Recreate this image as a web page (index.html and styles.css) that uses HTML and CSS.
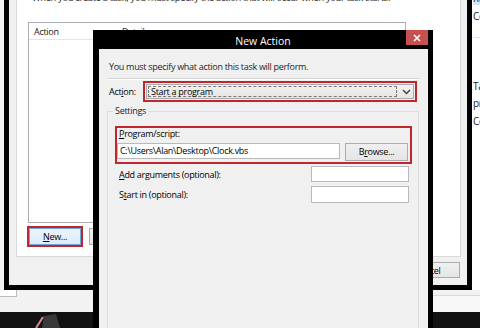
FILE: index.html
```html
<!DOCTYPE html>
<html>
<head>
<meta charset="utf-8">
<link rel="stylesheet" href="styles.css">
</head>
<body>
<div class="main-win">
  <div class="main-top">
    <div class="main-pane">
      <div class="mp-row sel">Run</div>
      <div class="mp-row r1">Connect</div>
      <div class="mp-row r2">Task Scheduler</div>
      <div class="mp-row r3">properties</div>
      <div class="mp-row r4">Conditions</div>
    </div>
  </div>
  <div class="main-bottom">
    <div class="mb-left"></div>
    <div class="mb-right"></div>
  </div>
</div>

<svg class="wallpaper" width="40" height="16" viewBox="0 0 40 16">
  <path d="M14 4 L26 2 L30 16 L12 16 Z" fill="#3a3a3a"/>
  <path d="M6 16 L13 5" stroke="#d98a95" stroke-width="2" fill="none"/>
</svg>

<div class="create-task">
  <div class="panel">
    <div class="ct-intro">When you create a task, you must specify the action that will occur when your task starts.</div>
    <div class="listbox">
      <div class="lb-head">
        <span class="lb-col1">Action</span>
        <span class="lb-col2">Details</span>
      </div>
    </div>
    <div class="ct-btns">
      <button class="btn btn-default hl"><u>N</u>ew...</button>
      <button class="btn"><u>E</u>dit...</button>
    </div>
  </div>
  <div class="ct-foot">
    <button class="btn foot-btn">OK</button>
    <button class="btn foot-btn">Cancel</button>
  </div>
</div>

<div class="new-action">
  <div class="na-title">
    <span></span>
    <span class="na-title-text">New Action</span>
    <span class="close"><svg width="8" height="8" viewBox="0 0 8 8"><path d="M1 1 L7 7 M7 1 L1 7" stroke="#fff" stroke-width="1.6"/></svg></span>
  </div>
  <div class="na-frame">
    <div class="na-intro">You must specify what action this task will perform.</div>
    <div class="na-sep"></div>
    <div class="action-row">
      <span class="action-label">Act<u>i</u>on:</span>
      <div class="combo-wrap">
        <div class="combo">
          <span class="combo-focus">Start a program</span>
          <svg class="combo-arrow" width="9" height="6" viewBox="0 0 9 6"><path d="M1 1 L4.5 4.5 L8 1" stroke="#444" stroke-width="1.5" fill="none"/></svg>
        </div>
      </div>
    </div>
    <fieldset class="settings">
      <legend>Settings</legend>
      <div class="prog-box">
        <div class="prog-label"><u>P</u>rogram/script:</div>
        <div class="prog-row">
          <div class="field prog-input">C:\Users\Alan\Desktop\Clock.vbs</div>
          <button class="btn browse">B<u>r</u>owse...</button>
        </div>
      </div>
      <div class="arg-row r-args">
        <span><u>A</u>dd arguments (optional):</span>
        <div class="field small-input"></div>
      </div>
      <div class="arg-row r-start">
        <span>S<u>t</u>art in (optional):</span>
        <div class="field small-input tall"></div>
      </div>
    </fieldset>
  </div>
</div>
</body>
</html>
```
FILE: styles.css
```css
* { box-sizing: border-box; }
html, body { margin: 0; padding: 0; }
body {
  width: 480px;
  height: 328px;
  overflow: hidden;
  position: relative;
  background: #121212;
  font-family: "Open Sans", "Noto Sans", sans-serif;
  font-size: 9px;
  letter-spacing: -0.3px;
  color: #000;
}
u { text-decoration: underline; text-underline-offset: 1px; }

/* main Task Scheduler window behind */
.main-win {
  position: absolute;
  left: 0; top: 0;
  width: 480px; height: 312px;
  background: #f2f2f2;
  display: flex;
  flex-direction: column;
}
.main-top { height: 290px; display: flex; justify-content: flex-end; }
.main-pane {
  width: 8px;
  background: #fff;
  overflow: hidden;
  white-space: nowrap;
  padding-left: 1px;
}
.mp-row { height: 14px; line-height: 14px; color: #222; font-size: 10px; }
.mp-row.sel { background: #cde8ff; margin-top: -9px; }
.mp-row.r1 { margin-top: 4px; border-bottom: 1px solid #e3e3e3; height: 29px; }
.mp-row.r2 { margin-top: 41px; }
.mp-row.r3 { margin-top: 3px; }
.mp-row.r4 { margin-top: 4px; }
.main-bottom { flex: 1; display: flex; justify-content: space-between; align-items: flex-start; }
.mb-left { width: 17px; height: 7px; background: #fff; border-right: 1px solid #bdbdbd; border-bottom: 1px solid #bdbdbd; }
.mb-right { width: 60px; height: 17px; margin-top: 5px; background: #f8f8f8; border-top: 1px solid #dadada; }

.wallpaper { position: absolute; left: 30px; top: 312px; }

/* Create Task window */
.create-task {
  position: absolute;
  left: 4px; top: -30px;
  width: 468px; height: 320px;
  border: 5px solid #000;
  border-top: none;
  background: #f0f0f0;
  padding: 6px 6px 0 7px;
  display: flex;
  flex-direction: column;
}
.panel {
  height: 281px;
  background: #fff;
  border: 1px solid #d9d9d9;
  padding: 14px 0 0 11px;
}
.ct-intro { line-height: 14px; white-space: nowrap; color: #1e1e1e; padding-left: 4px; font-size: 9.3px; }
.listbox {
  margin-top: 17px;
  width: 378px;
  height: 201px;
  border: 1px solid #abadb3;
  background: #fff;
}
.lb-head {
  height: 17px;
  display: flex;
  align-items: center;
  border-bottom: 1px solid #e5e5e5;
  color: #222;
}
.lb-col1 { width: 93px; padding-left: 5px; }
.ct-btns { margin-top: 5px; margin-left: 1px; display: flex; gap: 8px; }

.btn {
  font-family: inherit;
  font-size: 9px;
  letter-spacing: -0.3px;
  color: #000;
  height: 17px;
  width: 52px;
  padding: 0;
  line-height: 15px;
  border: 1px solid #acacac;
  background: linear-gradient(#f0f0f0, #e5e5e5);
  border-radius: 0;
}
.btn-default { border-color: #6fa6dc; background: linear-gradient(#ecf4fc, #dcecfc); }
.hl { outline: 2px solid #c0272d; outline-offset: 0; }

.ct-foot { margin-top: 5px; display: flex; justify-content: flex-end; gap: 7px; padding-right: 1px; }
.foot-btn { width: 65px; height: 16px; }

/* New Action dialog */
.new-action {
  position: absolute;
  left: 93px; top: 30px;
  width: 340px; height: 310px;
  display: flex;
  flex-direction: column;
}
.na-title {
  height: 19px;
  background: #000;
  display: grid;
  grid-template-columns: 1fr auto 1fr;
  padding: 0 5px;
  color: #fff;
}
.na-title-text { font-size: 10.5px; letter-spacing: 0; line-height: 22px; }
.close {
  justify-self: end;
  width: 22px; height: 15px;
  background: #c75050;
  display: flex;
  align-items: center;
  justify-content: center;
}
.na-frame {
  flex: 1;
  border-left: 6px solid #000;
  border-right: 5px solid #000;
  background: #f0f0f0;
  display: flex;
  flex-direction: column;
}
.na-intro { margin: 11px 0 0 10px; line-height: 14px; white-space: nowrap; color: #1e1e1e; }
.na-sep { margin: 4px 9px 0 8px; border-top: 1px solid #d5d5d5; border-bottom: 1px solid #fff; }
.action-row { margin-top: 1px; display: flex; align-items: center; padding-left: 10px; }
.action-label { width: 34px; }
.combo-wrap {
  width: 274px; height: 21px;
  border: 2px solid #c0272d;
  padding: 1px;
}
.combo {
  height: 15px;
  border: 1px solid #acacac;
  background: linear-gradient(#f2f2f2, #e5e5e5);
  display: flex;
  align-items: center;
  padding-left: 1px;
}
.combo-focus {
  width: 249px; height: 11px;
  border: 1px dashed #7a7a7a;
  line-height: 9px;
  padding-left: 2px;
  white-space: nowrap;
}
.combo-arrow { margin-left: 5px; }

.settings {
  margin: 3px 9px 0 8px;
  border: 1px solid #dcdcdc;
  padding: 0 6px 0 5px;
  min-width: 0;
  flex: 1;
}
.settings legend { padding: 0 2px; line-height: 12px; color: #1e1e1e; }
.prog-box {
  margin: 9px 0 0 2px;
  border: 2px solid #c0272d;
  padding: 0 2px 1px 0;
}
.prog-label { line-height: 12px; padding-left: 2px; }
.prog-row { margin-top: 3px; display: flex; align-items: flex-start; }
.field { background: #fff; border: 1px solid #b9b9b9; }
.prog-input { flex: 1; height: 16px; line-height: 14px; padding-left: 2px; white-space: nowrap; overflow: hidden; }
.browse { width: 63px; height: 18px; margin-left: 5px; line-height: 16px; }
.arg-row {
  display: flex;
  justify-content: space-between;
  align-items: center;
  padding-left: 6px;
  margin-right: 3px;
}
.r-args { margin-top: 2px; }
.r-start { margin-top: 4px; }
.small-input { width: 98px; height: 16px; }
.small-input.tall { height: 17px; }
```
